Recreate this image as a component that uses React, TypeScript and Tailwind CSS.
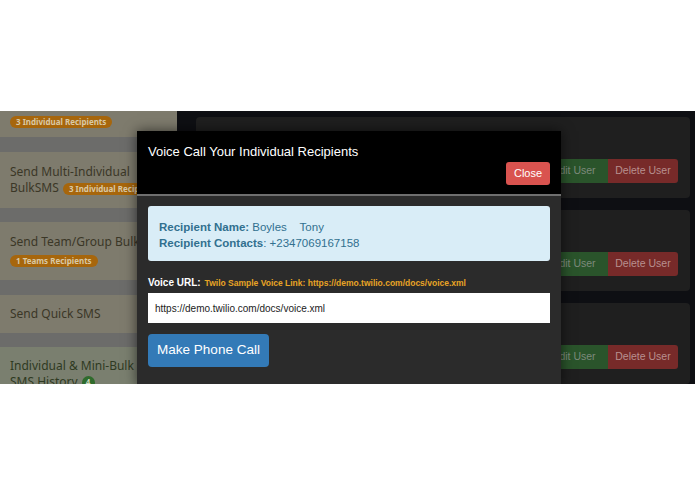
import React from 'react';

const comic = { fontFamily: '"Comic Sans MS", "Noto Sans", "DejaVu Sans", sans-serif' };
const arial = { fontFamily: '"Liberation Sans", Arial, sans-serif' };

function Badge({ children, className = '' }: { children: React.ReactNode; className?: string }) {
    return (
        <span
            className={`inline-block rounded-full bg-[#a7660c] px-[6px] text-[8px] font-bold leading-[12px] text-[#d9c9a6] whitespace-nowrap ${className}`}
        >
            {children}
        </span>
    );
}

function Sidebar() {
    return (
        <div className="w-[177px] shrink-0 bg-[#6c6c6a] text-[12px] text-[#3b3727]" style={comic}>
            <div className="h-[26px] bg-[#7e7b6d] px-[10px] pt-[1px]">
                <Badge>3 Individual Recipients</Badge>
            </div>
            <div className="mt-[15px] h-[56px] bg-[#7e7b6d] pl-[10px] pt-[12px] leading-[16px] whitespace-nowrap overflow-hidden">
                <div>Send Multi-Individual</div>
                <div>
                    BulkSMS <Badge className="ml-[1px]">3 Individual Recipients</Badge>
                </div>
            </div>
            <div className="mt-[14px] h-[58px] bg-[#7e7b6d] pl-[10px] pt-[12px] leading-[16px] whitespace-nowrap overflow-hidden">
                <div>Send Team/Group BulkSMS</div>
                <div className="mt-[2px]">
                    <Badge>1 Teams Recipients</Badge>
                </div>
            </div>
            <div className="mt-[15px] h-[38px] bg-[#7e7b6d] pl-[10px] pt-[10px] whitespace-nowrap">Send Quick SMS</div>
            <div className="mt-[14px] h-[60px] bg-[#7a7f6f] pl-[10px] pt-[11px] leading-[16px] whitespace-nowrap overflow-hidden text-[#2f3a22]">
                <div>Individual &amp; Mini-Bulk SMS</div>
                <div className="flex items-center gap-1">
                    SMS History
                    <span className="inline-flex h-[13px] w-[13px] items-center justify-center rounded-full bg-[#2f6b2c] text-[8px] font-bold text-[#cfd8c0]">
                        4
                    </span>
                </div>
            </div>
        </div>
    );
}

function UserCard() {
    return (
        <div className="flex h-[81px] items-end justify-end rounded-[4px] bg-[#1f1f1f] pb-[15px] pr-[12px]" style={arial}>
            <button className="h-[24px] w-[68px] rounded-l-[3px] bg-[#2a542b] text-[10.5px] text-[#7d8a7c]">Edit User</button>
            <button className="h-[24px] w-[70px] rounded-r-[3px] bg-[#772a29] text-[10.5px] text-[#b8908f]">Delete User</button>
        </div>
    );
}

function Modal() {
    return (
        <div
            className="absolute left-[137px] top-[20px] w-[424px] bg-[#2b2b2b] shadow-[0_0_12px_rgba(0,0,0,0.6)]"
            style={arial}
        >
            <div className="h-[65px] border-b-2 border-[#6f6f6f] bg-black px-[11px] pt-[12px]">
                <div className="text-[13px] leading-[18px] text-white">Voice Call Your Individual Recipients</div>
                <div className="mt-[1px] flex justify-end">
                    <button className="h-[23px] w-[44px] rounded-[3px] bg-[#d9534f] text-[11px] text-white">Close</button>
                </div>
            </div>
            <div className="px-[11px] pb-[20px] pt-[10px]">
                <div className="h-[55px] rounded-[3px] bg-[#d9edf7] px-[11px] pt-[13px] text-[11.5px] leading-[16px] text-[#31708f]">
                    <div>
                        <b>Recipient Name:</b> Boyles&nbsp;&nbsp;&nbsp;&nbsp;Tony
                    </div>
                    <div>
                        <b>Recipient Contacts</b>: +2347069167158
                    </div>
                </div>
                <div className="mt-[15px] flex items-baseline gap-[4px] leading-[14px]">
                    <span className="text-[10px] font-bold text-white">Voice URL:</span>
                    <span className="text-[8.5px] font-bold text-[#e8a425]">
                        Twilo Sample Voice Link: https://demo.twilio.com/docs/voice.xml
                    </span>
                </div>
                <div className="mt-[3px] flex h-[30px] items-center bg-white px-[7px] text-[10px] text-[#222]">
                    https://demo.twilio.com/docs/voice.xml
                </div>
                <button className="mt-[11px] h-[33px] w-[121px] rounded-[4px] bg-[#337ab7] text-[13.5px] text-white">
                    Make Phone Call
                </button>
            </div>
        </div>
    );
}

export default function App() {
    return (
        <div className="h-[494px] w-[695px] bg-white overflow-hidden">
            <div className="h-[111px]" />
            <div className="relative flex h-[273px] overflow-hidden bg-[#0e0f13]">
                <Sidebar />
                <div className="ml-[19px] mr-[5px] flex flex-1 flex-col gap-[12px] pt-[6px]">
                    <UserCard />
                    <UserCard />
                    <UserCard />
                </div>
                <Modal />
            </div>
        </div>
    );
}
